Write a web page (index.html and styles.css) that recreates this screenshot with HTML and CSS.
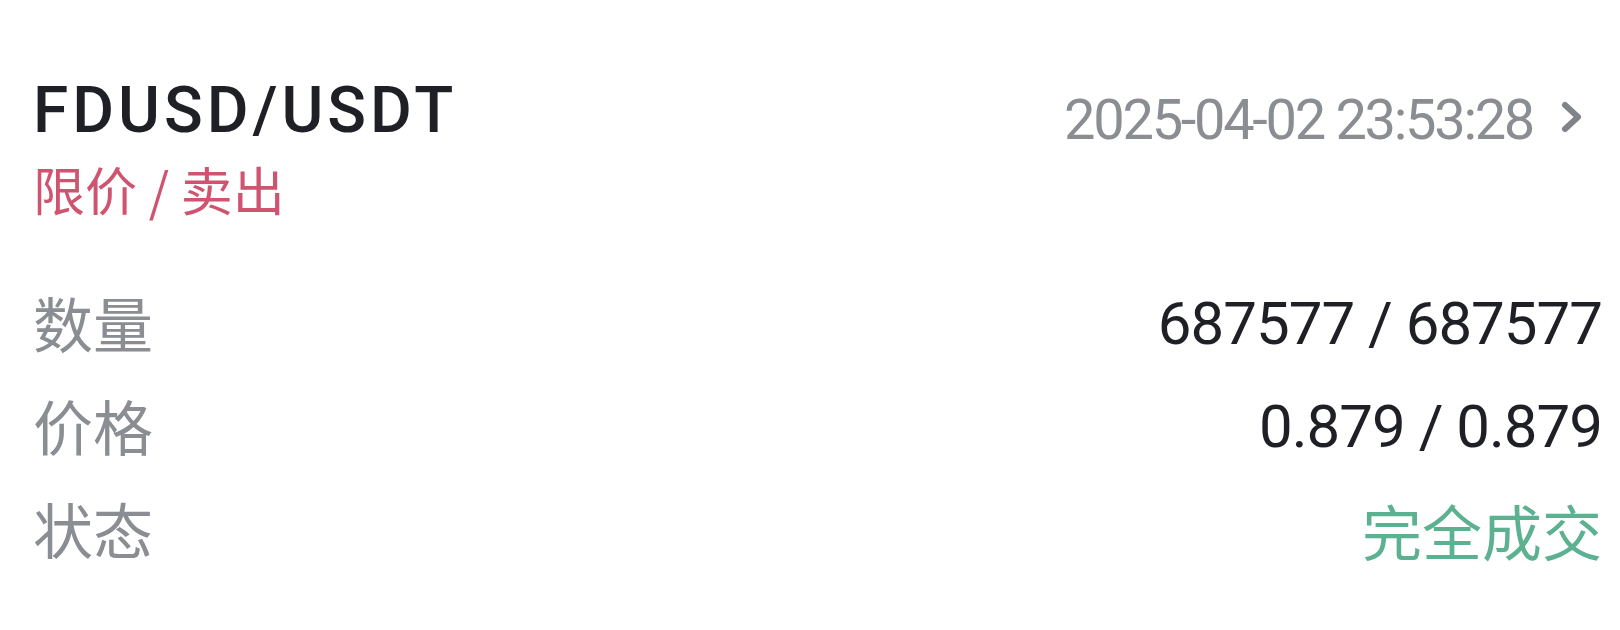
FILE: index.html
```html
<!DOCTYPE html>
<html lang="zh-CN">
<head>
  <meta charset="UTF-8">
  <meta name="viewport" content="width=device-width, initial-scale=1.0">
  <title>订单详情</title>
  <link rel="stylesheet" href="styles.css">
</head>
<body>
  <div class="order">
    <div class="order-head">
      <div class="pair">
        <div class="symbol">FDUSD/USDT</div>
        <div class="side">限价 / 卖出</div>
      </div>
      <div class="time">
        <span>2025-04-02 23:53:28</span>
        <svg class="chevron" width="22" height="32" viewBox="0 0 22 32">
          <polyline points="4,4 17,16 4,28" fill="none" stroke="#808388" stroke-width="6" stroke-linecap="round" stroke-linejoin="round"/>
        </svg>
      </div>
    </div>

    <div class="row">
      <span class="label">数量</span>
      <span class="value">687577 / 687577</span>
    </div>
    <div class="row">
      <span class="label">价格</span>
      <span class="value">0.879 / 0.879</span>
    </div>
    <div class="row">
      <span class="label">状态</span>
      <span class="value filled">完全成交</span>
    </div>
  </div>
</body>
</html>
```

FILE: styles.css
```css
body { margin: 0; background: #fff; font-family: Roboto, "Noto Sans CJK SC", sans-serif; }
.order { padding: 76px 18px 0 33px; }
.order-head { display: flex; justify-content: space-between; align-items: flex-start; height: 196px; }
.symbol { font-size: 64px; line-height: 70px; font-weight: 500; color: #1e2026; letter-spacing: 4px; }
.side { font-family: "Noto Sans CJK SC", sans-serif; font-size: 52px; line-height: 60px; color: #cf5470; margin-top: 13px; }
.time { display: flex; align-items: center; gap: 28px; margin-right: 19px; margin-top: 14px; font-size: 56px; line-height: 60px; color: #8a8d92; letter-spacing: -2.3px; }
.chevron { display: block; margin-top: -6px; }
.row { display: flex; justify-content: space-between; align-items: center; height: 103px; }
.label { font-family: "Noto Sans CJK SC", sans-serif; font-size: 60px; color: #8a8d92; margin-top: -4px; }
.value { font-size: 60px; color: #1e2026; letter-spacing: -1px; }
.value.filled { font-family: "Noto Sans CJK SC", sans-serif; font-size: 60px; color: #5bb190; letter-spacing: 0; }
```
